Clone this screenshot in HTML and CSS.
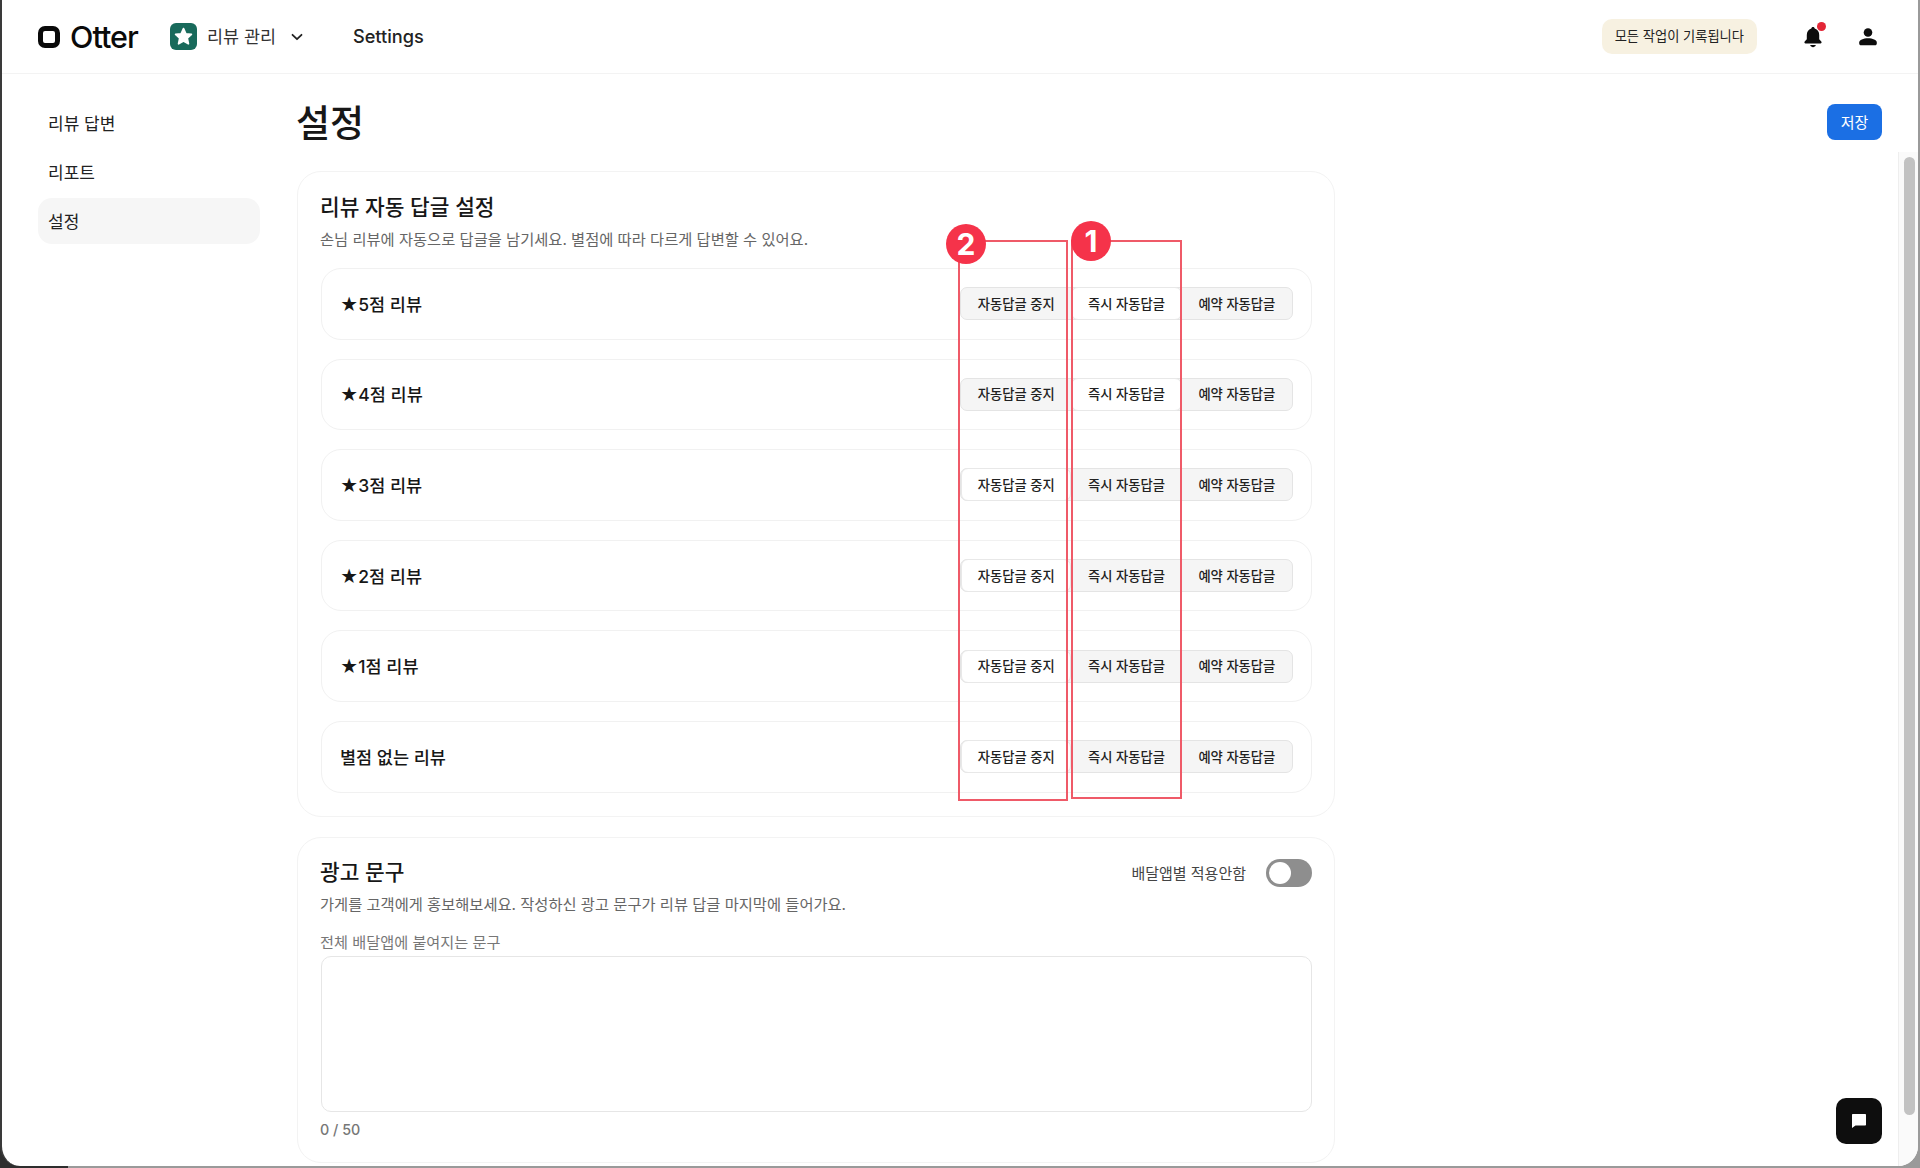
FILE: index.html
```html
<!DOCTYPE html>
<html lang="ko">
<head>
  <meta charset="UTF-8" />
  <meta name="viewport" content="width=device-width, initial-scale=1.0"/>
  <title>Otter 설정</title>
  <link rel="stylesheet" href="styles.css">
</head>
<body>
  <div class="window">
    <header class="topbar">
      <div class="logo">
        <span class="logo-mark"></span>
        <span class="logo-text">Otter</span>
      </div>
      <div class="store">
        <span class="store-icon">
          <svg width="21" height="21" viewBox="0 0 24 24"><path fill="#fff" stroke="#fff" stroke-width="2" stroke-linejoin="round" d="M12 3l2.7 5.9 6.3.7-4.7 4.3 1.3 6.4L12 17.1l-5.6 3.2 1.3-6.4L3 9.6l6.3-.7z"/></svg>
        </span>
        <span class="store-name">리뷰 관리</span>
        <svg class="chevron" width="14" height="14" viewBox="0 0 14 14"><path fill="none" stroke="#222" stroke-width="1.8" stroke-linecap="round" stroke-linejoin="round" d="M2.5 4.8L7 9.2l4.5-4.4"/></svg>
      </div>
      <a class="top-link">Settings</a>
      <div class="top-right">
        <span class="log-badge">모든 작업이 기록됩니다</span>
        <span class="bell">
          <svg width="22" height="24" viewBox="0 0 22 24"><path fill="#0d0d0d" d="M11 2c-1 0-1.6.7-1.7 1.6C6.300 4.400 4.800 7 4.800 10v4.200L2.700 16.600c-.7.800-.2 1.900.9 1.900h14.800c1.100 0 1.600-1.100.9-1.900l-2.100-2.400V10c0-3-1.500-5.600-4.500-6.400C12.600 2.700 12 2 11 2z"/><path fill="#0d0d0d" d="M8.200 20h5.600c-.3 1.300-1.500 2.200-2.800 2.200S8.500 21.300 8.200 20z"/></svg>
          <i class="bell-dot"></i>
        </span>
        <svg class="user" width="20" height="20" viewBox="0 0 20 20"><circle cx="10" cy="5.500" r="4.300" fill="#0d0d0d"/><path fill="#0d0d0d" d="M1.200 15.500c0-2.600 4.200-4.200 8.800-4.200s8.800 1.600 8.800 4.200v.9c0 1-.8 1.800-1.800 1.800H3c-1 0-1.800-.8-1.800-1.800z"/></svg>
      </div>
    </header>

    <div class="layout">
      <nav class="sidebar">
        <a class="side-item">리뷰 답변</a>
        <a class="side-item">리포트</a>
        <a class="side-item active">설정</a>
      </nav>

      <main class="content">
        <div class="title-row">
          <h1>설정</h1>
          <button class="save-btn">저장</button>
        </div>

        <section class="card card-reply">
          <h2>리뷰 자동 답글 설정</h2>
          <p class="desc">손님 리뷰에 자동으로 답글을 남기세요. 별점에 따라 다르게 답변할 수 있어요.</p>
          <div class="rows">
            <div class="row">
              <span class="row-name">★5점 리뷰</span>
              <div class="segs"><span class="seg">자동답글 중지</span><span class="seg on">즉시 자동답글</span><span class="seg">예약 자동답글</span></div>
            </div>
            <div class="row">
              <span class="row-name">★4점 리뷰</span>
              <div class="segs"><span class="seg">자동답글 중지</span><span class="seg on">즉시 자동답글</span><span class="seg">예약 자동답글</span></div>
            </div>
            <div class="row">
              <span class="row-name">★3점 리뷰</span>
              <div class="segs"><span class="seg on">자동답글 중지</span><span class="seg">즉시 자동답글</span><span class="seg">예약 자동답글</span></div>
            </div>
            <div class="row">
              <span class="row-name">★2점 리뷰</span>
              <div class="segs"><span class="seg on">자동답글 중지</span><span class="seg">즉시 자동답글</span><span class="seg">예약 자동답글</span></div>
            </div>
            <div class="row">
              <span class="row-name">★1점 리뷰</span>
              <div class="segs"><span class="seg on">자동답글 중지</span><span class="seg">즉시 자동답글</span><span class="seg">예약 자동답글</span></div>
            </div>
            <div class="row">
              <span class="row-name">별점 없는 리뷰</span>
              <div class="segs"><span class="seg on">자동답글 중지</span><span class="seg">즉시 자동답글</span><span class="seg">예약 자동답글</span></div>
            </div>
          </div>
        </section>

        <section class="card card-ad">
          <div class="ad-head">
            <h2>광고 문구</h2>
            <div class="toggle-wrap">
              <span class="toggle-label">배달앱별 적용안함</span>
              <span class="toggle"><i></i></span>
            </div>
          </div>
          <p class="desc">가게를 고객에게 홍보해보세요. 작성하신 광고 문구가 리뷰 답글 마지막에 들어가요.</p>
          <label class="ad-label" for="adText">전체 배달앱에 붙여지는 문구</label>
          <textarea id="adText" class="ad-text"></textarea>
          <div class="count">0 / 50</div>
        </section>
      </main>
    </div>

    <!-- red marks drawn over the screenshot -->
    <div class="mark mark-two"></div>
    <div class="mark mark-one"></div>
    <span class="mark-num num-two">2</span>
    <span class="mark-num num-one">1</span>

    <div class="scrollbar"><div class="scroll-thumb"></div></div>

    <button class="chat-btn">
      <svg width="18" height="18" viewBox="0 0 18 18"><path fill="#fff" d="M3 2h12c.6 0 1 .4 1 1v9.500c0 .6-.4 1-1 1H5.500L2 16V3c0-.6.4-1 1-1z"/></svg>
    </button>
  </div>
</body>
</html>
```

FILE: styles.css
```css
* {
  box-sizing: border-box;
}

html, body {
  margin: 0;
  height: 100%;
}

body {
  font-family: Inter, "Noto Sans CJK KR", sans-serif;
  color: #171717;
  background: linear-gradient(to right, #2e2e2e 68px, #9a9a9a 68px);
  overflow: hidden;
}

.window {
  position: relative;
  width: 1918px;
  height: 1166px;
  background: #fff;
  border-left: 2px solid #3a3a3a;
  border-bottom-left-radius: 20px;
  border-bottom-right-radius: 20px;
  overflow: hidden;
}

/* top bar */
.topbar {
  display: flex;
  align-items: center;
  height: 74px;
  padding: 0 36px;
  border-bottom: 1px solid #f3f3f3;
}

.logo {
  display: flex;
  align-items: center;
  gap: 10px;
  width: 132px;
}

.logo-mark {
  width: 22px;
  height: 22px;
  border: 5px solid #0a0a0a;
  border-radius: 7px;
}

.logo-text {
  font-size: 30.500px;
  font-weight: 500;
  letter-spacing: -1px;
  color: #0a0a0a;
}

.store {
  display: flex;
  align-items: center;
}

.store-icon {
  display: flex;
  align-items: center;
  justify-content: center;
  width: 27px;
  height: 27px;
  background: #186a5b;
  border-radius: 6px;
}

.store-name {
  margin-left: 10px;
  padding-bottom: 2px;
  font-size: 17.400px;
  color: #333;
}

.chevron {
  margin-left: 14px;
}

.top-link {
  margin-left: 49px;
  font-size: 18.200px;
  font-weight: 500;
  color: #222;
  padding-bottom: 1px;
}

.top-right {
  display: flex;
  align-items: center;
  margin-left: auto;
  margin-right: 4px;
}

.log-badge {
  display: flex;
  align-items: center;
  height: 35px;
  padding: 0 13px 2px 13px;
  background: #f7f1e1;
  border-radius: 10px;
  font-size: 13.250px;
  color: #222;
}

.bell {
  position: relative;
  display: flex;
  margin-left: 45px;
}

.bell-dot {
  position: absolute;
  top: -3px;
  right: -2px;
  width: 9px;
  height: 9px;
  background: #e32636;
  border-radius: 50%;
}

.user {
  margin-left: 34px;
}

/* sidebar + content */
.layout {
  display: flex;
}

.sidebar {
  display: flex;
  flex-direction: column;
  gap: 3px;
  width: 295px;
  padding: 26px 0 0 36px;
}

.side-item {
  display: flex;
  align-items: center;
  width: 222px;
  height: 46px;
  padding: 0 0 2px 10px;
  border-radius: 14px;
  font-size: 17px;
  color: #222;
}

.side-item.active {
  background: #f6f6f6;
}

.content {
  width: 1038px;
  position: relative;
}

.title-row {
  display: flex;
  align-items: center;
  height: 97px;
  padding-bottom: 4px;
}

h1 {
  margin: 0;
  font-size: 37px;
  font-weight: 500;
  margin-left: -1px;
  color: #171717;
}

.save-btn {
  position: absolute;
  top: 30px;
  left: 1530px;
  width: 55px;
  height: 36px;
  padding-bottom: 2px;
  background: #1b6fe4;
  color: #fff;
  border: none;
  border-radius: 8px;
  font-family: inherit;
  font-size: 15px;
}

.card {
  background: #fff;
  border: 1px solid #f3f3f3;
  border-radius: 24px;
  padding: 0 22px;
}

.card h2 {
  margin: 0;
  font-size: 21.400px;
  font-weight: 500;
  line-height: 30px;
  color: #171717;
}

.desc {
  margin: 0;
  font-size: 15.300px;
  line-height: 22px;
  color: #666;
}

.card-reply {
  height: 646px;
  padding-top: 20px;
}

.card-reply .desc {
  margin-top: 7px;
}

.rows {
  display: flex;
  flex-direction: column;
  gap: 19px;
  margin-top: 17px;
}

.row {
  display: flex;
  align-items: center;
  justify-content: space-between;
  height: 71.600px;
  margin-left: 1px;
  padding: 0 18px 0 18px;
  border: 1px solid #f1f1f1;
  border-radius: 20px;
}

.row-name {
  padding-bottom: 1px;
  font-size: 17.500px;
  font-weight: 500;
  color: #171717;
}

.segs {
  display: flex;
  height: 33px;
  background: #f5f5f5;
  border: 1px solid #e4e4e4;
  border-radius: 7px;
}

.seg {
  display: flex;
  align-items: center;
  justify-content: center;
  width: 110.300px;
  margin: -1px 0;
  padding-bottom: 1px;
  font-size: 13.300px;
  font-weight: 500;
  color: #222;
  border-radius: 7px;
  border: 1px solid transparent;
}

.seg.on {
  background: #fff;
  border-color: #e8e8e8;
}

.card-ad {
  height: 326px;
  margin-top: 20px;
  padding-top: 19px;
}

.ad-head {
  display: flex;
  align-items: center;
  justify-content: space-between;
  height: 30px;
}

.toggle-wrap {
  display: flex;
  align-items: center;
  gap: 20px;
  margin-top: 2px;
}

.toggle-label {
  padding-bottom: 2px;
  font-size: 15px;
  color: #444;
}

.toggle {
  display: flex;
  align-items: center;
  width: 46px;
  height: 28px;
  padding: 0 3px;
  background: #8e8e8e;
  border-radius: 14px;
}

.toggle i {
  width: 22px;
  height: 22px;
  background: #fff;
  border-radius: 50%;
}

.card-ad .desc {
  margin-top: 7px;
}

.ad-label {
  display: block;
  margin-top: 16px;
  font-size: 15.200px;
  line-height: 22px;
  color: #777;
}

.ad-text {
  display: block;
  width: calc(100% - 1px);
  height: 156px;
  margin: 2px 0 0 1px;
  border: 1px solid #e6e6e6;
  border-radius: 10px;
  background: #fff;
  resize: none;
  outline: none;
}

.count {
  margin-top: 8px;
  font-size: 14.300px;
  line-height: 20px;
  font-weight: 500;
  color: #777;
}

/* annotations */
.mark {
  position: absolute;
  border: 2px solid #ef5a68;
}

.mark-two {
  left: 956px;
  top: 240px;
  width: 110px;
  height: 561px;
}

.mark-one {
  left: 1069px;
  top: 240px;
  width: 111px;
  height: 559px;
}

.mark-num {
  position: absolute;
  display: flex;
  align-items: center;
  justify-content: center;
  width: 40px;
  height: 40px;
  background: #f5334a;
  border-radius: 50%;
  color: #fff;
  font-size: 30px;
  font-weight: 700;
}

.num-two {
  left: 944px;
  top: 224px;
}

.num-one {
  left: 1069px;
  top: 221px;
}

/* scrollbar + chat */
.scrollbar {
  position: absolute;
  left: 1896px;
  top: 152px;
  width: 20px;
  height: 1014px;
  padding: 5px 4px 0 5px;
  background: #fafafa;
  border-left: 1px solid #eee;
}

.scroll-thumb {
  width: 11px;
  height: 958px;
  background: #c2c2c2;
  border-radius: 6px;
}

.chat-btn {
  position: absolute;
  left: 1834px;
  top: 1098px;
  display: flex;
  align-items: center;
  justify-content: center;
  width: 46px;
  height: 46px;
  background: #0e0e0e;
  border: none;
  border-radius: 10px;
}
```
